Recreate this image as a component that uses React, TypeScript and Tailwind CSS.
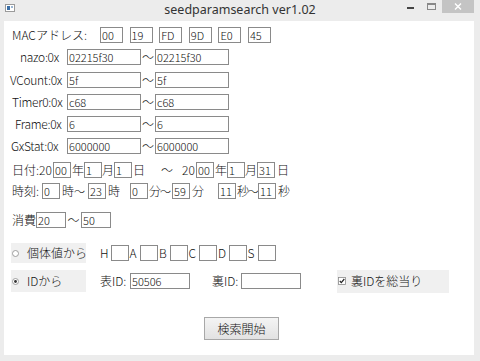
import React from 'react';

const font = { fontFamily: '"Noto Sans CJK JP", "Noto Sans", sans-serif' };

function Box({ w, v = '' }: { w: string; v?: string }) {
  return (
    <div
      className={`${w} h-[16px] shrink-0 border border-[#8a8a8a] bg-white pl-[1px] text-[11px] leading-[14px] text-[#111] overflow-hidden whitespace-nowrap`}
    >
      {v}
    </div>
  );
}

function Txt({ w, children, cls = '' }: { w?: string; children?: React.ReactNode; cls?: string }) {
  return <span className={`${w ?? ''} shrink-0 whitespace-nowrap text-[12px] leading-[16px] ${cls}`}>{children}</span>;
}

function Range({ label, pl, a, b }: { label: string; pl: string; a: string; b: string }) {
  return (
    <div className="flex h-[16px] items-center">
      <Txt w="w-[63px]" cls={`${pl} text-[11.5px] tracking-[-0.3px]`}>{label}</Txt>
      <Box w="w-[74px]" v={a} />
      <Txt w="w-[14px]" cls="text-center">～</Txt>
      <Box w="w-[74px]" v={b} />
    </div>
  );
}

function Radio({ on }: { on?: boolean }) {
  return (
    <svg width="7" height="7" viewBox="0 0 7 7" className="shrink-0">
      <circle cx="3.5" cy="3.5" r="3" fill="#fff" stroke="#8a8a8a" strokeWidth="0.8" />
      {on && <circle cx="3.5" cy="3.5" r="1.4" fill="#333" />}
    </svg>
  );
}

export default function App() {
  const mac = ['00', '19', 'FD', '9D', 'E0', '45'];
  const ivs = ['H', 'A', 'B', 'C', 'D', 'S'];

  return (
    <div className="flex h-[361px] w-[480px] flex-col bg-[#ececec] font-light text-[#111]" style={font}>
      {/* Title bar */}
      <div className="grid h-[21px] grid-cols-[1fr_auto_1fr]">
        <div className="flex items-start pl-[5px] pt-[4px]">
          <div className="flex h-[8px] w-[10px] border border-[#9a9a9a] bg-white">
            <div className="mt-[1px] ml-[1px] h-[4px] w-[3px] bg-[#3a6ea5]" />
            <div className="mt-[1px] ml-[1px] h-[2px] w-[2px] bg-[#9bb7d4]" />
          </div>
        </div>
        <div
          className="pt-[1px] text-[12.5px] font-normal leading-[18px] text-[#333]"
          style={{ fontFamily: '"Noto Sans", "Open Sans", sans-serif' }}
        >
          seedparamsearch ver1.02
        </div>
        <div className="flex items-start justify-end pr-[6px]">
          <div className="mt-[7px] h-[2px] w-[7px] bg-[#444]" />
          <div className="mt-[3px] ml-[13px] h-[7px] w-[9px] border border-t-2 border-[#888]" />
          <div className="ml-[6px] flex h-[13px] w-[32px] items-center justify-center bg-[#c4c4c4]">
            <svg width="8" height="7" viewBox="0 0 8 7">
              <path d="M1 0.5 L7 6.5 M7 0.5 L1 6.5" stroke="#fff" strokeWidth="1.4" />
            </svg>
          </div>
        </div>
      </div>

      {/* Client area */}
      <div className="ml-[4px] h-[334px] w-[470px] bg-white pt-[6px]">
        <div className="flex h-[16px] items-center">
          <Txt w="w-[96px]" cls="pl-[8px]">MACアドレス:</Txt>
          <div className="flex gap-[6.6px]">
            {mac.map((m) => (
              <Box key={m} w="w-[23px]" v={m} />
            ))}
          </div>
        </div>

        <div className="mt-[6px]">
          <Range label="nazo:0x" pl="pl-[16px]" a="02215f30" b="02215f30" />
        </div>
        <div className="mt-[7px]">
          <Range label="VCount:0x" pl="pl-[6px]" a="5f" b="5f" />
        </div>
        <div className="mt-[6px]">
          <Range label="Timer0:0x" pl="pl-[8px]" a="c68" b="c68" />
        </div>
        <div className="mt-[6px]">
          <Range label="Frame:0x" pl="pl-[11px]" a="6" b="6" />
        </div>
        <div className="mt-[6px]">
          <Range label="GxStat:0x" pl="pl-[7px]" a="6000000" b="6000000" />
        </div>

        {/* Date */}
        <div className="mt-[8px] flex h-[16px] items-center">
          <Txt w="w-[49px]" cls="pl-[8px]">日付:20</Txt>
          <Box w="w-[18px]" v="00" />
          <Txt w="w-[13px]" cls="pl-[1px]">年</Txt>
          <Box w="w-[18px]" v="1" />
          <Txt w="w-[12px]">月</Txt>
          <Box w="w-[18px]" v="1" />
          <Txt w="w-[20px]" cls="pl-[1px]">日</Txt>
          <Txt w="w-[30px]" cls="text-center">～</Txt>
          <Txt w="w-[14px]">20</Txt>
          <Box w="w-[18px]" v="00" />
          <Txt w="w-[13px]" cls="pl-[1px]">年</Txt>
          <Box w="w-[18px]" v="1" />
          <Txt w="w-[12px]">月</Txt>
          <Box w="w-[18px]" v="31" />
          <Txt cls="pl-[2px]">日</Txt>
        </div>

        {/* Time */}
        <div className="mt-[5px] flex h-[16px] items-center">
          <Txt w="w-[38px]" cls="pl-[8px]">時刻:</Txt>
          <Box w="w-[18px]" v="0" />
          <Txt w="w-[28px]" cls="pl-[2px]">時<span className="text-[11px]">～</span></Txt>
          <Box w="w-[18px]" v="23" />
          <Txt w="w-[24px]" cls="pl-[2px]">時</Txt>
          <Box w="w-[18px]" v="0" />
          <Txt w="w-[24px]" cls="pl-[1px] tracking-[-1px]">分<span className="text-[11px]">～</span></Txt>
          <Box w="w-[18px]" v="59" />
          <Txt w="w-[28px]" cls="pl-[2px]">分</Txt>
          <Box w="w-[18px]" v="11" />
          <Txt w="w-[22px]" cls="pl-[1px] tracking-[-1.5px]">秒<span className="text-[11px]">～</span></Txt>
          <Box w="w-[18px]" v="11" />
          <Txt cls="pl-[2px]">秒</Txt>
        </div>

        {/* Consumption */}
        <div className="mt-[13px] flex h-[16px] items-center">
          <Txt w="w-[32px]" cls="pl-[8px]">消費</Txt>
          <Box w="w-[30px]" v="20" />
          <Txt w="w-[15px]" cls="text-center">～</Txt>
          <Box w="w-[30px]" v="50" />
        </div>

        {/* Search from IVs */}
        <div className="mt-[15px] flex h-[20px] items-center pl-[7px]">
          <div className="flex h-[20px] w-[75px] shrink-0 items-center bg-[#f0f0f0] pl-[1px]">
            <Radio />
            <Txt cls="ml-[8px]">個体値から</Txt>
          </div>
          <div className="ml-[13px] flex">
            {ivs.map((s) => (
              <div key={s} className="flex items-center">
                <Txt w="w-[11.5px]" cls="pl-[1px]">{s}</Txt>
                <Box w="w-[18px]" />
              </div>
            ))}
          </div>
        </div>

        {/* Search from ID */}
        <div className="mt-[6px] flex h-[24px] items-center pl-[7px]">
          <div className="flex h-[22px] w-[75px] shrink-0 items-center bg-[#f0f0f0] pl-[1px]">
            <Radio on />
            <Txt cls="ml-[8px]">IDから</Txt>
          </div>
          <Txt w="w-[30px]" cls="ml-[14px]">表ID:</Txt>
          <Box w="w-[60px]" v="50506" />
          <Txt w="w-[29px]" cls="ml-[22px]">裏ID:</Txt>
          <Box w="w-[60px]" />
          <div className="ml-[36px] flex h-[23px] w-[112px] shrink-0 items-center bg-[#f0f0f0] pl-[1px]">
            <svg width="8" height="8" viewBox="0 0 8 8" className="shrink-0">
              <rect x="0.5" y="0.5" width="7" height="7" fill="#fff" stroke="#8a8a8a" strokeWidth="0.8" />
              <path d="M1.8 4 L3.3 5.6 L6.3 2" fill="none" stroke="#222" strokeWidth="1.2" />
            </svg>
            <Txt cls="ml-[5px]">裏IDを総当り</Txt>
          </div>
        </div>

        {/* Search button */}
        <div className="mt-[24px] flex">
          <button className="ml-[200px] h-[23px] w-[75px] border border-[#a8a8a8] bg-gradient-to-b from-[#f4f4f4] to-[#e2e2e2] text-[12px] leading-[20px] text-[#111]">
            検索開始
          </button>
        </div>
      </div>
    </div>
  );
}
